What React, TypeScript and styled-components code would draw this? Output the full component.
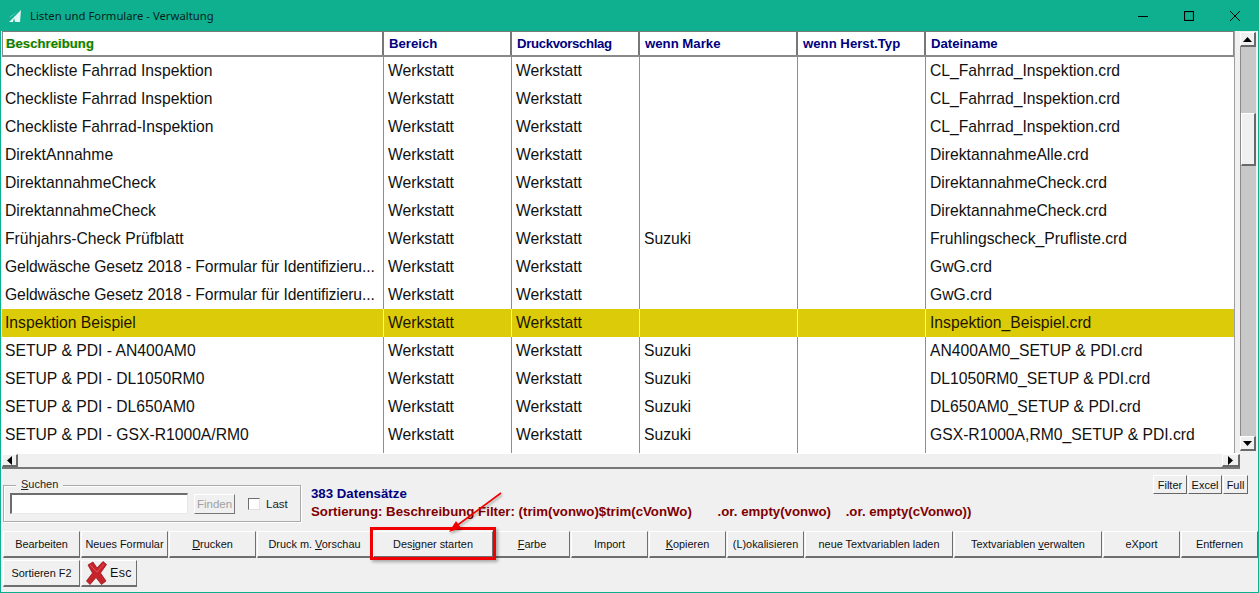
import React from 'react';
import styled, { createGlobalStyle } from 'styled-components';

const GlobalStyle = createGlobalStyle`
	html, body {
		margin: 0;
		padding: 0;
		background: #f0f0f0;
	}
`;

const Win = styled.div`
	width: 1259px;
	height: 593px;
	box-sizing: border-box;
	background: #f0f0f0;
	border: 1px solid #0fb08f;
	border-top: 0;
	display: flex;
	flex-direction: column;
	font-family: 'Liberation Sans', Arial, sans-serif;
	position: relative;
	overflow: hidden;
`;

const TitleBar = styled.div`
	height: 31px;
	flex: 0 0 31px;
	margin: 0 -1px;
	background: #0fb08f;
	display: flex;
	align-items: center;
	padding: 0 1px 0 8px;
	color: #06231d;
	font-family: 'Noto Sans', sans-serif;
	font-size: 11.3px;
`;

const TitleText = styled.span`
	margin-left: 8px;
	flex: 1;
`;

const WinBtn = styled.div`
	width: 46px;
	height: 31px;
	display: flex;
	align-items: center;
	justify-content: center;
`;

const GridWrap = styled.div`
	flex: 0 0 438px;
	height: 438px;
	margin-left: 1px;
	display: grid;
	grid-template-columns: 1232px 6px 17px;
	grid-template-rows: 422px 16px;
	background: #f0f0f0;
`;

const Table = styled.div`
	background: #fff;
	overflow: hidden;
`;

const cols = '382px 128px 128px 158px 128px 1fr';

const HeaderRow = styled.div`
	display: grid;
	grid-template-columns: ${cols};
	height: 26px;
	box-sizing: border-box;
	border-top: 1px solid #7a7a7a;
	border-bottom: 2px solid #8a8a8a;
`;

const HeadCell = styled.div<{ $active?: boolean; $narrow?: boolean }>`
	display: flex;
	align-items: center;
	padding-left: ${({ $active }) => ($active ? '3px' : '5px')};
	font-size: 13.2px;
	font-weight: 700;
	letter-spacing: ${({ $narrow }) => ($narrow ? '-0.35px' : '0')};
	color: ${({ $active }) => ($active ? '#0a7a1a' : '#00007f')};
	text-shadow: ${({ $active }) => ($active ? '-1px 0 0 rgba(225, 225, 0, 0.7)' : 'none')};
	border-left: ${({ $active }) => ($active ? '1px solid #8a8a8a' : '0')};
	border-right: 2px solid #777;
	&:last-child {
		border-right: 1px solid #8a8a8a;
	}
`;

const Row = styled.div<{ $selected?: boolean }>`
	display: grid;
	grid-template-columns: ${cols};
	height: 28px;
	background: ${({ $selected }) => ($selected ? '#dccb08' : 'transparent')};
`;

const Cell = styled.div<{ $selected?: boolean; $tight?: boolean }>`
	display: flex;
	align-items: center;
	padding-left: 4px;
	font-size: 15.7px;
	letter-spacing: ${({ $tight }) => ($tight ? '-0.13px' : '0')};
	color: ${({ $selected }) => ($selected ? '#1c1500' : '#111')};
	border-right: 1px solid ${({ $selected }) => ($selected ? '#f0eecc' : '#8e8e8e')};
	white-space: nowrap;
	overflow: hidden;
	&:first-child {
		padding-left: 3px;
	}
	&:last-child {
		border-right: 0;
	}
`;

const Filler = styled.div`
	display: grid;
	grid-template-columns: ${cols};
	height: 4px;
`;

const FillerCell = styled.div`
	border-right: 1px solid #8e8e8e;
	&:last-child {
		border-right: 0;
	}
`;

const Gutter = styled.div`
	border-left: 1px solid #a0a0a0;
	box-sizing: border-box;
`;

const VScroll = styled.div`
	display: flex;
	flex-direction: column;
	padding: 1px 1px 2px 0;
	box-sizing: border-box;
`;

const ScrollBtn = styled.div<{ $w?: number; $h?: number }>`
	width: ${({ $w }) => ($w ? `${$w}px` : '100%')};
	height: ${({ $h }) => ($h ? `${$h}px` : '100%')};
	flex: 0 0 auto;
	box-sizing: border-box;
	background: #f0f0f0;
	border-top: 1px solid #fff;
	border-left: 1px solid #fff;
	border-right: 2px solid #696969;
	border-bottom: 2px solid #696969;
	display: flex;
	align-items: center;
	justify-content: center;
`;

const Track = styled.div`
	flex: 1;
	display: flex;
	flex-direction: column;
	background: #c8c8c8;
	border-left: 1px solid #8a8a8a;
`;

const Thumb = styled.div`
	height: 53px;
	margin-top: 66px;
	box-sizing: border-box;
	background: #f0f0f0;
	border-top: 1px solid #fff;
	border-left: 1px solid #fff;
	border-right: 2px solid #696969;
	border-bottom: 2px solid #696969;
`;

const HScroll = styled.div`
	grid-column: 1 / span 2;
	display: flex;
	align-items: stretch;
	height: 16px;
	border-top: 1px solid #fff;
	border-bottom: 2px solid #777;
	box-sizing: border-box;
`;

const HTrack = styled.div`
	flex: 1;
`;

const SearchRow = styled.div`
	display: flex;
	height: 62px;
	padding: 0 0 0 2px;
	position: relative;
`;

const Fieldset = styled.fieldset`
	margin: 16px 0 0 0;
	padding: 0;
	width: 298px;
	height: 37px;
	box-sizing: border-box;
	border: 1px solid #a9a9a9;
	box-shadow: inset 1px 1px 0 #fff, 1px 1px 0 #fff;
	position: relative;
`;

const Legend = styled.span`
	position: absolute;
	left: 12px;
	top: -8px;
	background: #f0f0f0;
	padding: 0 5px;
	font-size: 11px;
	color: #222;
`;

const SearchBody = styled.div`
	display: flex;
	align-items: center;
	height: 100%;
	padding-left: 6px;
`;

const Input = styled.div`
	width: 178px;
	height: 21px;
	box-sizing: border-box;
	background: #fff;
	border-top: 2px solid #6d6d6d;
	border-left: 2px solid #6d6d6d;
	border-right: 1px solid #e8e8e8;
	border-bottom: 1px solid #e8e8e8;
`;

const FindBtn = styled.div`
	margin-left: 6px;
	width: 41px;
	height: 20px;
	box-sizing: border-box;
	display: flex;
	align-items: center;
	justify-content: center;
	font-size: 11.5px;
	color: #a0a0a0;
	background: #f0f0f0;
	border-top: 1px solid #fff;
	border-left: 1px solid #fff;
	border-right: 1px solid #777;
	border-bottom: 1px solid #777;
`;

const CheckBox = styled.div`
	margin-left: 13px;
	width: 12px;
	height: 12px;
	box-sizing: border-box;
	background: #fff;
	border-top: 1px solid #6d6d6d;
	border-left: 1px solid #6d6d6d;
	border-right: 1px solid #e0e0e0;
	border-bottom: 1px solid #e0e0e0;
`;

const CheckLabel = styled.span`
	margin-left: 6px;
	font-size: 11.5px;
	color: #222;
`;

const Info = styled.div`
	margin-left: 10px;
	padding-top: 16px;
	font-size: 13.25px;
	font-weight: 700;
	line-height: 18px;
`;

const InfoBlue = styled.div`
	color: #00007f;
`;

const InfoRed = styled.div`
	color: #7f0000;
	white-space: pre;
`;

const TopRight = styled.div`
	position: absolute;
	right: 10px;
	top: 6px;
	display: flex;
	gap: 1px;
`;

const SmallBtn = styled.div<{ $w: number }>`
	width: ${({ $w }) => $w}px;
	height: 19px;
	box-sizing: border-box;
	display: flex;
	align-items: center;
	justify-content: center;
	font-size: 11px;
	color: #111;
	background: #f0f0f0;
	border-top: 1px solid #fff;
	border-left: 1px solid #fff;
	border-right: 1px solid #666;
	border-bottom: 1px solid #666;
`;

const ButtonRow = styled.div<{ $gapBelow?: number }>`
	display: flex;
	padding-left: 2px;
	height: 27px;
	gap: 1px;
	margin-bottom: ${({ $gapBelow }) => $gapBelow ?? 0}px;
`;

const ToolBtn = styled.div<{ $w: number }>`
	width: ${({ $w }) => $w}px;
	height: 27px;
	flex: 0 0 auto;
	box-sizing: border-box;
	display: flex;
	align-items: center;
	justify-content: center;
	gap: 3px;
	font-size: 10.9px;
	color: #111;
	background: #f0f0f0;
	border-top: 1px solid #fff;
	border-left: 1px solid #fff;
	border-right: 1px solid #6e6e6e;
	border-bottom: 2px solid #6e6e6e;
	white-space: nowrap;
	& u {
		text-underline-offset: 1px;
	}
`;

const EscLabel = styled.span`
	font-size: 12.5px;
	letter-spacing: 0.4px;
`;

const Callout = styled.div`
	position: absolute;
	left: 369px;
	top: 527px;
	width: 126px;
	height: 33px;
	box-sizing: border-box;
	border: 3px solid #f00000;
	box-shadow: 2px 2px 3px rgba(0, 0, 0, 0.3);
	pointer-events: none;
`;

const Arrow = styled.svg`
	position: absolute;
	left: 444px;
	top: 490px;
	pointer-events: none;
	filter: drop-shadow(1px 2px 1px rgba(0, 0, 0, 0.3));
`;

const TriUp = () => (
	<svg width="9" height="5" viewBox="0 0 9 5">
		<path d="M4.5 0 L9 5 H0 Z" fill="#000" />
	</svg>
);
const TriDown = () => (
	<svg width="9" height="5" viewBox="0 0 9 5">
		<path d="M0 0 H9 L4.5 5 Z" fill="#000" />
	</svg>
);
const TriLeft = () => (
	<svg width="5" height="9" viewBox="0 0 5 9">
		<path d="M5 0 V9 L0 4.5 Z" fill="#000" />
	</svg>
);
const TriRight = () => (
	<svg width="5" height="9" viewBox="0 0 5 9">
		<path d="M0 0 L5 4.5 L0 9 Z" fill="#000" />
	</svg>
);

const rows: string[][] = [
	['Checkliste Fahrrad Inspektion', 'Werkstatt', 'Werkstatt', '', '', 'CL_Fahrrad_Inspektion.crd'],
	['Checkliste Fahrrad Inspektion', 'Werkstatt', 'Werkstatt', '', '', 'CL_Fahrrad_Inspektion.crd'],
	['Checkliste Fahrrad-Inspektion', 'Werkstatt', 'Werkstatt', '', '', 'CL_Fahrrad_Inspektion.crd'],
	['DirektAnnahme', 'Werkstatt', 'Werkstatt', '', '', 'DirektannahmeAlle.crd'],
	['DirektannahmeCheck', 'Werkstatt', 'Werkstatt', '', '', 'DirektannahmeCheck.crd'],
	['DirektannahmeCheck', 'Werkstatt', 'Werkstatt', '', '', 'DirektannahmeCheck.crd'],
	['Frühjahrs-Check Prüfblatt', 'Werkstatt', 'Werkstatt', 'Suzuki', '', 'Fruhlingscheck_Prufliste.crd'],
	['Geldwäsche Gesetz 2018 - Formular für Identifizieru...', 'Werkstatt', 'Werkstatt', '', '', 'GwG.crd'],
	['Geldwäsche Gesetz 2018 - Formular für Identifizieru...', 'Werkstatt', 'Werkstatt', '', '', 'GwG.crd'],
	['Inspektion Beispiel', 'Werkstatt', 'Werkstatt', '', '', 'Inspektion_Beispiel.crd'],
	['SETUP & PDI - AN400AM0', 'Werkstatt', 'Werkstatt', 'Suzuki', '', 'AN400AM0_SETUP & PDI.crd'],
	['SETUP & PDI - DL1050RM0', 'Werkstatt', 'Werkstatt', 'Suzuki', '', 'DL1050RM0_SETUP & PDI.crd'],
	['SETUP & PDI - DL650AM0', 'Werkstatt', 'Werkstatt', 'Suzuki', '', 'DL650AM0_SETUP & PDI.crd'],
	['SETUP & PDI - GSX-R1000A/RM0', 'Werkstatt', 'Werkstatt', 'Suzuki', '', 'GSX-R1000A,RM0_SETUP & PDI.crd'],
];

const headers = ['Beschreibung', 'Bereich', 'Druckvorschlag', 'wenn Marke', 'wenn Herst.Typ', 'Dateiname'];

export default function App() {
	return (
		<Win>
			<GlobalStyle />
			<TitleBar>
				<svg width="14" height="14" viewBox="0 0 14 14">
					<path d="M1 13 L13 1 L12 13 H7 L6 9 L5 13 Z" fill="#e6f7f3" />
					<path d="M1 9 L10 2 L3 7 Z" fill="#e6f7f3" />
				</svg>
				<TitleText>Listen und Formulare - Verwaltung</TitleText>
				<WinBtn>
					<svg width="10" height="10" viewBox="0 0 10 10">
						<path d="M0 5.5 H10" stroke="#000" strokeWidth="1" />
					</svg>
				</WinBtn>
				<WinBtn>
					<svg width="10" height="10" viewBox="0 0 10 10">
						<rect x="0.5" y="0.5" width="9" height="9" fill="none" stroke="#000" strokeWidth="1.2" />
					</svg>
				</WinBtn>
				<WinBtn>
					<svg width="10" height="10" viewBox="0 0 10 10">
						<path d="M0 0 L10 10 M10 0 L0 10" stroke="#000" strokeWidth="1" />
					</svg>
				</WinBtn>
			</TitleBar>

			<GridWrap>
				<Table>
					<HeaderRow>
						{headers.map((h, i) => (
							<HeadCell key={h} $active={i === 0} $narrow={i === 2}>
								{h}
							</HeadCell>
						))}
					</HeaderRow>
					{rows.map((r, i) => (
						<Row key={i} $selected={i === 9}>
							{r.map((c, j) => (
								<Cell key={j} $selected={i === 9} $tight={c.endsWith('...')}>
									{c}
								</Cell>
							))}
						</Row>
					))}
					<Filler>
						{headers.map((h) => (
							<FillerCell key={h} />
						))}
					</Filler>
				</Table>
				<Gutter />
				<VScroll>
					<ScrollBtn $h={15}>
						<TriUp />
					</ScrollBtn>
					<Track>
						<Thumb />
					</Track>
					<ScrollBtn $h={15}>
						<TriDown />
					</ScrollBtn>
				</VScroll>
				<HScroll>
					<ScrollBtn $w={16}>
						<TriLeft />
					</ScrollBtn>
					<HTrack />
					<ScrollBtn $w={18}>
						<TriRight />
					</ScrollBtn>
				</HScroll>
			</GridWrap>

			<SearchRow>
				<Fieldset>
					<Legend>
						<u>S</u>uchen
					</Legend>
					<SearchBody>
						<Input />
						<FindBtn>Finden</FindBtn>
						<CheckBox />
						<CheckLabel>Last</CheckLabel>
					</SearchBody>
				</Fieldset>
				<Info>
					<InfoBlue>383 Datensätze</InfoBlue>
					<InfoRed>{'Sortierung: Beschreibung Filter: (trim(vonwo)$trim(cVonWo)       .or. empty(vonwo)    .or. empty(cVonwo))'}</InfoRed>
				</Info>
				<TopRight>
					<SmallBtn $w={34}>Filter</SmallBtn>
					<SmallBtn $w={34}>Excel</SmallBtn>
					<SmallBtn $w={25}>Full</SmallBtn>
				</TopRight>
			</SearchRow>

			<ButtonRow $gapBelow={2}>
				<ToolBtn $w={77}>Bearbeiten</ToolBtn>
				<ToolBtn $w={87}>Neues Formular</ToolBtn>
				<ToolBtn $w={87}>
					<span>
						<u>D</u>rucken
					</span>
				</ToolBtn>
				<ToolBtn $w={115}>
					<span>
						Druck m. <u>V</u>orschau
					</span>
				</ToolBtn>
				<ToolBtn $w={120}>
					<span>
						Des<u>i</u>gner starten
					</span>
				</ToolBtn>
				<ToolBtn $w={76}>
					<span>
						<u>F</u>arbe
					</span>
				</ToolBtn>
				<ToolBtn $w={77}>Import</ToolBtn>
				<ToolBtn $w={77}>
					<span>
						<u>K</u>opieren
					</span>
				</ToolBtn>
				<ToolBtn $w={77}>(L)okalisieren</ToolBtn>
				<ToolBtn $w={148}>neue Textvariablen laden</ToolBtn>
				<ToolBtn $w={148}>
					<span>
						Textvariablen <u>v</u>erwalten
					</span>
				</ToolBtn>
				<ToolBtn $w={77}>eXport</ToolBtn>
				<ToolBtn $w={77}>Entfernen</ToolBtn>
			</ButtonRow>
			<ButtonRow>
				<ToolBtn $w={77}>Sortieren F2</ToolBtn>
				<ToolBtn $w={56}>
					<svg width="21" height="24" viewBox="0 0 21 24">
						<path d="M2 4 L7 1 L11 7 L17 0.5 L20.5 3.5 L14.5 12 L20 20 L15.5 23.5 L10 16.5 L4 23.5 L0.5 20 L6.5 12 Z" fill="#c8232a" stroke="#96171c" strokeWidth="0.8" />
						<path d="M4 4 L11 11 L18 3" fill="none" stroke="#e2545a" strokeWidth="1" />
					</svg>
					<EscLabel>Esc</EscLabel>
				</ToolBtn>
			</ButtonRow>

			<Callout />
			<Arrow width="60" height="50" viewBox="0 0 60 50">
				<path d="M56 3 L10 37" stroke="#f00000" strokeWidth="1.6" />
				<path d="M4 42 L11 31 L16 38 Z" fill="#f00000" />
			</Arrow>
		</Win>
	);
}
